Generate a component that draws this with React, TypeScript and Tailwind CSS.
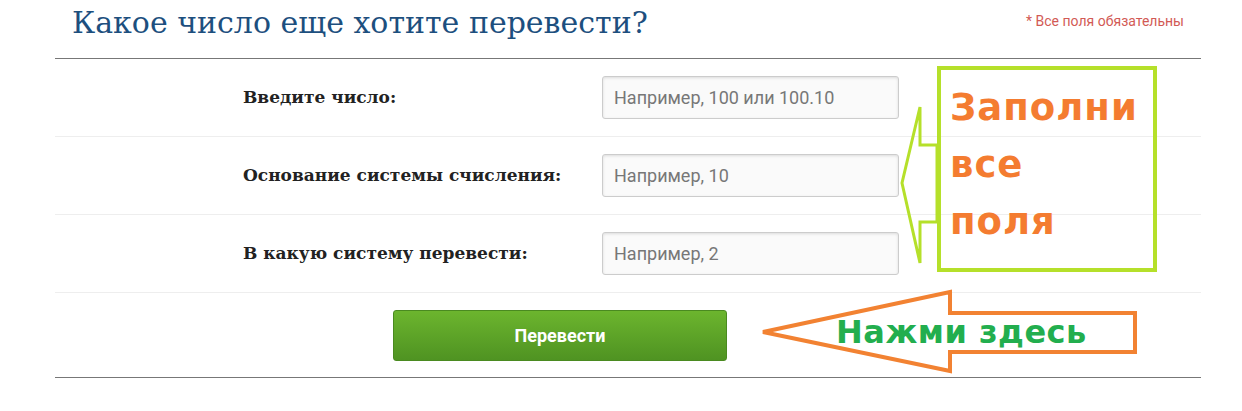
import React from "react"

const rows = [
    { label: "Введите число:", placeholder: "Например, 100 или 100.10" },
    { label: "Основание системы счисления:", placeholder: "Например, 10" },
    { label: "В какую систему перевести:", placeholder: "Например, 2" },
]

export default function App() {
    return (
        <div className="relative w-[1242px] h-[411px] bg-white overflow-hidden">
            <div className="ml-[55px] w-[1146px]">
                <div className="flex items-start justify-between h-[59px] border-b border-[#777]">
                    <h1 className="pl-[17px] pt-[5px] text-[30px] leading-[36px] text-[#1d4f7e] font-['DejaVu_Serif',serif]">
                        Какое число еще хотите перевести?
                    </h1>
                    <span className="pt-[11px] pr-[17px] text-[14px] text-[#d25a55] font-['Roboto',sans-serif]">
                        * Все поля обязательны
                    </span>
                </div>
                {rows.map((row) => (
                    <div key={row.label} className="flex items-center h-[78px] border-b border-[#eee]">
                        <label className="w-[547px] pl-[188px] text-[17px] font-bold text-[#222] font-['DejaVu_Serif',serif]">
                            {row.label}
                        </label>
                        <input
                            placeholder={row.placeholder}
                            className="w-[297px] h-[43px] px-[11px] rounded-[3px] border border-[#ccc] bg-[#fafafa] shadow-[inset_0_1px_3px_rgba(0,0,0,0.12)] text-[18px] text-[#555] placeholder:text-[#777] font-['Roboto',sans-serif] outline-none"
                        />
                    </div>
                ))}
                <div className="flex items-center h-[85px] border-b border-[#777] pl-[338px]">
                    <button className="w-[334px] h-[51px] rounded-[3px] bg-gradient-to-b from-[#6cb52e] to-[#4f9322] border border-[#4a8a20] text-white text-[18px] font-bold font-['Roboto',sans-serif]">
                        Перевести
                    </button>
                </div>
            </div>

            {/* annotation arrows */}
            <svg className="absolute left-0 top-0" width="1242" height="411">
                <polygon
                    points="937,145 920,145 920,107 902,183 920,263 920,222 937,222"
                    fill="none"
                    stroke="#b5e02a"
                    strokeWidth="3"
                />
                <polygon
                    points="1135,313 950,313 950,292 763,332 950,371 950,352 1135,352"
                    fill="none"
                    stroke="#f28232"
                    strokeWidth="4"
                />
            </svg>
            <div className="absolute left-[937px] top-[66px] w-[220px] h-[206px] border-4 border-[#b5e02a] pl-[9px] pt-[9px] text-[37px] leading-[57px] tracking-[1px] font-bold text-[#f47c30] font-['DejaVu_Sans',sans-serif]">
                Заполни<br />все<br />поля
            </div>
            <div className="absolute left-[836px] top-[313px] text-[32px] leading-[38px] tracking-[0.5px] font-bold text-[#22ae4e] font-['DejaVu_Sans',sans-serif]">
                Нажми здесь
            </div>
        </div>
    )
}
